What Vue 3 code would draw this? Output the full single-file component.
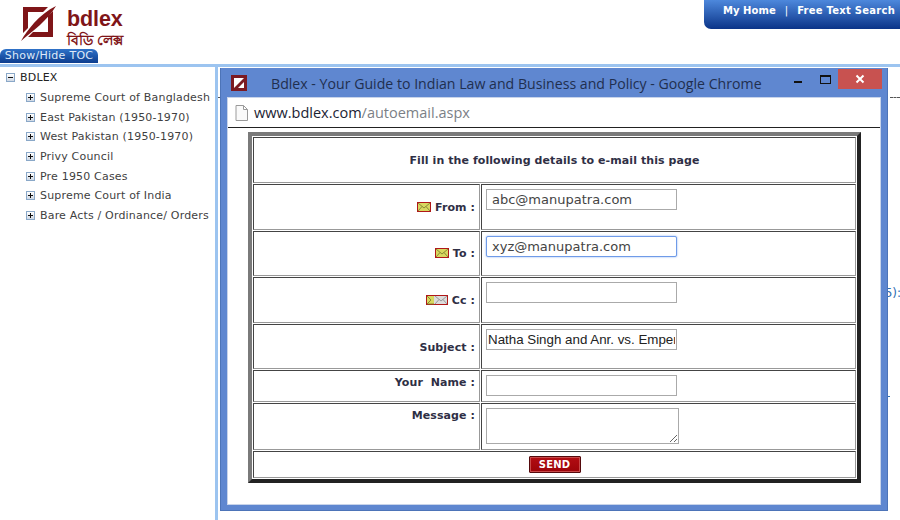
<script setup>
const tree = ['Supreme Court of Bangladesh','East Pakistan (1950-1970)','West Pakistan (1950-1970)','Privy Council','Pre 1950 Cases','Supreme Court of India','Bare Acts / Ordinance/ Orders']
</script>

<template>
  <div class="page">
    <header class="head">
      <div class="brand">
        <div class="logo">
          <svg width="38" height="38" viewBox="0 0 38 38">
            <path d="M3 3H28L23 8H8V24L3 29Z M33 7V33H8L13 28H28V12Z" fill="#7f1518"/>
            <path d="M36 2C28 6 20 12 14 19C9 25 4 31 1 37C7 32 14 26 20 21C26 15 32 9 36 2Z" fill="#7f1518"/>
          </svg>
          <div class="logotext">
            <div class="lat">bdlex</div>
            <div class="ben">বিডি লেক্স</div>
          </div>
        </div>
        <div class="toc">Show/Hide TOC</div>
      </div>
      <nav class="nav"><span>My Home</span><i>|</i><span class="fts">Free Text Search</span></nav>
    </header>
    <div class="body">
      <aside class="side">
        <div class="root"><span class="box minus"></span>BDLEX</div>
        <div v-for="t in tree" :key="t" class="item"><span class="box plus"></span>{{ t }}</div>
      </aside>
      <main class="rest">
        <span class="bit left"></span>
        <span class="bit one"></span>
        <span class="bit five">5):</span>
        <span class="bit dot"></span>
      </main>
    </div>

    <section class="win">
      <div class="title">
        <svg class="ficon" width="16" height="16" viewBox="0 0 16 16">
          <rect width="16" height="16" fill="#7b1a22"/><rect x="3" y="3" width="10" height="10" fill="#fff"/>
          <path d="M15 1L1 15H5L15 5Z" fill="#7b1a22"/>
        </svg>
        <span class="ttxt">Bdlex - Your Guide to Indian Law and Business and Policy - Google Chrome</span>
        <span class="ctl min"></span>
        <span class="ctl max"></span>
        <span class="close">
          <svg width="10" height="10" viewBox="0 0 10 10"><path d="M1.5 1.5L8.5 8.5M8.5 1.5L1.5 8.5" stroke="#fff" stroke-width="2"/></svg>
        </span>
      </div>
      <div class="inner">
        <div class="url">
          <svg width="13" height="16" viewBox="0 0 13 16"><path d="M1 .5H8.5L12.5 4.5V15.5H1Z M8.5 .5V4.5H12.5" fill="#fafafa" stroke="#9a9a9a"/></svg>
          <span class="host">www.bdlex.com</span><span class="path">/autoemail.aspx</span>
        </div>
        <div class="content">
          <table class="form">
            <colgroup><col class="c1" /><col /></colgroup>
            <tbody>
              <tr class="r1"><td colspan="2" class="hd">Fill in the following details to e-mail this page</td></tr>
              <tr class="r2">
                <td class="lb"><svg class="env" width="14" height="10" viewBox="0 0 14 10"><rect x=".5" y=".5" width="13" height="9" fill="#d8d860" stroke="#b01818"/><path d="M1 1L7 6L13 1M1 9L5 4.5M13 9L9 4.5" fill="none" stroke="#77772a" stroke-width=".8"/></svg> From :</td>
                <td class="fd"><input class="in" value="abc@manupatra.com" /></td>
              </tr>
              <tr class="r3">
                <td class="lb"><svg class="env" width="14" height="10" viewBox="0 0 14 10"><rect x=".5" y=".5" width="13" height="9" fill="#d8d860" stroke="#b01818"/><path d="M1 1L7 6L13 1M1 9L5 4.5M13 9L9 4.5" fill="none" stroke="#77772a" stroke-width=".8"/></svg> To :</td>
                <td class="fd"><input class="in focus" value="xyz@manupatra.com" /></td>
              </tr>
              <tr class="r4">
                <td class="lb"><svg class="env" width="22" height="10" viewBox="0 0 22 10"><rect x=".5" y=".5" width="21" height="9" fill="#dcdcdc" stroke="#b01818"/><rect x="1" y="1" width="7" height="8" fill="#d8d860"/><path d="M1 1L5 5L1 9M1 9H8" fill="none" stroke="#77772a" stroke-width=".8"/><path d="M9 1L15 6L21 1M9 9L13 4.5M21 9L17 4.5" fill="none" stroke="#888" stroke-width=".8"/></svg> Cc :</td>
                <td class="fd"><input class="in" value="" /></td>
              </tr>
              <tr class="r5">
                <td class="lb sub">Subject :</td>
                <td class="fd"><input class="in subj" value="Natha Singh and Anr. vs. Emperor" /></td>
              </tr>
              <tr class="r6">
                <td class="lb top">Your&nbsp; Name :</td>
                <td class="fd"><input class="in" value="" /></td>
              </tr>
              <tr class="r7">
                <td class="lb top">Message :</td>
                <td class="fd"><textarea class="ta"></textarea></td>
              </tr>
              <tr class="r8"><td colspan="2" class="sendc"><button class="send">SEND</button></td></tr>
            </tbody>
          </table>
        </div>
      </div>
    </section>
  </div>
</template>

<style>
html, body { margin: 0; background: #fff; }
</style>

<style scoped>
.page { position: relative; width: 900px; height: 520px; overflow: hidden; background: #fff; font-family: "DejaVu Sans", Verdana, sans-serif; }
.head { height: 64px; display: flex; justify-content: space-between; }
.brand { display: flex; flex-direction: column; }
.logo { display: flex; height: 48px; padding: 4px 0 0 20px; box-sizing: border-box; gap: 9px; }
.logotext { padding-top: 3px; }
.lat { font: bold 21.5px/25px "Liberation Sans", Arial, sans-serif; color: #7f1518; letter-spacing: -.1px; }
.ben { font: bold 14px/16px "Noto Sans", "Liberation Sans", sans-serif; color: #7f1518; }
.toc { width: 98px; height: 14px; margin-top: 1px; box-sizing: border-box; background: linear-gradient(#2f72c8, #0c3d8f); border-radius: 6px 6px 0 0; color: #dfeaf8; font-size: 11px; line-height: 14px; text-align: center; letter-spacing: .28px; white-space: nowrap; }
.nav { width: 196px; height: 29px; box-sizing: border-box; background: linear-gradient(#4d88dc, #0b3488); border-radius: 0 0 0 7px; color: #fff; font-size: 10px; font-weight: bold; letter-spacing: .05px; padding: 4px 0 0 19px; display: flex; gap: 9px; white-space: nowrap; line-height: 14px; }
.nav i { font-style: normal; font-weight: normal; }
.fts { letter-spacing: .25px; }
.body { display: flex; height: 456px; border-top: 3px solid #9cc4f0; box-sizing: border-box; }
.side { width: 218px; box-sizing: border-box; border-right: 3px solid #9cc4f0; color: #3f3f3f; font-size: 11px; letter-spacing: .18px; padding-top: 1px; }
.root, .item { display: flex; align-items: center; height: 19.7px; white-space: nowrap; }
.root { padding-left: 6px; gap: 5px; color: #222; }
.item { padding-left: 26px; gap: 5px; }
.box { position: relative; width: 9px; height: 9px; box-sizing: border-box; border: 1px solid #8aa8c8; background: linear-gradient(#fff, #cfd8e4); flex: none; }
.box::before { content: ""; position: absolute; left: 1px; right: 1px; top: 3px; height: 1px; background: #111; }
.plus::after { content: ""; position: absolute; top: 1px; bottom: 1px; left: 3px; width: 1px; background: #111; }
.rest { flex: 1; position: relative; }
.bit.left { position: absolute; left: 0; top: 30px; width: 2px; height: 1px; background: #555; }
.bit.one { position: absolute; right: 0; top: 30px; width: 10px; border-top: 1px dashed #555; }
.bit.five { position: absolute; right: -1px; top: 219px; font-size: 12px; color: #2f6db0; }
.bit.dot { position: absolute; left: 670px; top: 329px; width: 2px; height: 1px; background: #2f6db0; }
.win { position: absolute; left: 220px; top: 68px; width: 668px; height: 443px; box-sizing: border-box; background: #5f87d0; border: 1px solid #4d74b8; border-top: 0; padding: 0 7px 6px 7px; display: flex; flex-direction: column; }
.title { height: 30px; flex: none; position: relative; }
.ficon { position: absolute; left: 3px; top: 7px; }
.ttxt { position: absolute; left: 43px; top: 6px; font: 14.15px/20px "Open Sans", "Noto Sans", sans-serif; color: #1f2f4f; white-space: nowrap; }
.ctl.min { position: absolute; left: 566px; top: 13px; width: 8px; height: 2px; background: #111; }
.ctl.max { position: absolute; left: 592px; top: 7px; width: 9px; height: 6px; border: 1px solid #111; border-top-width: 2px; }
.close { position: absolute; left: 610px; top: 1px; width: 44px; height: 20px; background: #c85250; display: flex; align-items: center; justify-content: center; }
.inner { flex: 1; display: flex; flex-direction: column; background: #fff; box-shadow: 0 0 0 1px #c8d4ea; }
.url { height: 30px; box-sizing: border-box; flex: none; border-bottom: 1px solid #222; display: flex; align-items: center; padding-left: 7px; font: 14.5px "Open Sans", "Noto Sans", sans-serif; white-space: nowrap; }
.url svg { margin-right: 6px; }
.host { color: #1b2433; }
.path { color: #7b7f86; }
.content { padding: 4px 0 0 20px; }
.form { width: 613px; height: 351px; box-sizing: border-box; border-collapse: separate; border-spacing: 1px; border-style: solid; border-width: 4px; border-color: #7a7a7a #222 #222 #7a7a7a; background: #fff; table-layout: fixed; font-size: 11px; font-weight: bold; color: #2f2f45; letter-spacing: .08px; }
.c1 { width: 227px; }
.form td { box-sizing: border-box; border: 1px solid; border-color: #444 #999 #999 #444; padding: 0; }
.r1 { height: 46px; } .r2 { height: 46px; } .r3 { height: 45px; } .r4 { height: 46px; } .r5 { height: 45px; } .r6 { height: 32px; } .r7 { height: 47px; } .r8 { height: 27px; }
.hd { text-align: center; }
.lb { text-align: right; padding-right: 4px !important; vertical-align: middle; white-space: nowrap; }
.lb.sub { padding-top: 2px !important; }
.lb.top { vertical-align: top; padding-top: 5px !important; }
.env { vertical-align: -1px; }
.fd { vertical-align: top; padding: 4px 0 0 4px !important; }
.in { display: block; width: 191px; height: 21px; box-sizing: border-box; border: 1px solid #aaa; outline: 0; padding: 0 5px; font: 13px "DejaVu Sans", Verdana, sans-serif; color: #444; background: #fff; border-radius: 0; }
.in.focus { border: 1px solid #6f9be8; box-shadow: 0 0 2px #7fa8ee; border-radius: 2px; }
.in.subj { font: 13.33px "Liberation Sans", Arial, sans-serif; color: #222; padding: 0 1px; }
.ta { display: block; width: 193px; height: 36px; box-sizing: border-box; border: 1px solid #aaa; outline: 0; margin: 0; padding: 0; }
.sendc { text-align: center; vertical-align: middle; }
.send { width: 52px; height: 17px; padding: 0; border: 1px solid #54090c; border-radius: 1px; background: linear-gradient(#b30d13, #9c0409); box-shadow: inset 0 0 0 1px #c94a4a; color: #fff; font: bold 10px/15px "DejaVu Sans", Verdana, sans-serif; letter-spacing: .2px; display: block; margin: 0 auto; }
</style>
